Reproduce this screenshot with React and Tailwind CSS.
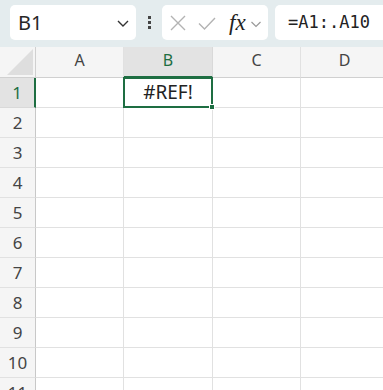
import React from "react";

const cols = ["A", "B", "C", "D"];
const rows = [1, 2, 3, 4, 5, 6, 7, 8, 9, 10, 11];

export default function App() {
  return (
    <div className="w-[383px] h-[390px] overflow-hidden bg-white" style={{ fontFamily: '"Noto Sans", "Open Sans", sans-serif' }}>
      {/* Toolbar */}
      <div className="h-[47px] bg-[#e4ecee] flex items-start pt-[5px] pl-[10px] gap-0">
        <div className="w-[126px] h-[35px] bg-white rounded-[5px] flex items-center justify-between pl-[8px] pr-[6px]">
          <span className="text-[20px] text-[#262626] leading-none">B1</span>
          <svg width="14" height="10" viewBox="0 0 14 10" className="mt-[1px]">
            <path d="M2 3 L7 8 L12 3" fill="none" stroke="#333" strokeWidth="1.4" />
          </svg>
        </div>
        <div className="w-[26px] h-[35px] flex flex-col items-center justify-center gap-[2px]">
          <div className="w-[3px] h-[3px] bg-[#444]" />
          <div className="w-[3px] h-[3px] bg-[#444]" />
          <div className="w-[3px] h-[3px] bg-[#444]" />
        </div>
        <div className="w-[106px] h-[35px] bg-white rounded-[5px] flex items-center pl-[7px]">
          <svg width="18" height="18" viewBox="0 0 18 18">
            <path d="M2 2 L16 16 M16 2 L2 16" stroke="#b3b3b3" strokeWidth="1.4" fill="none" />
          </svg>
          <svg width="20" height="18" viewBox="0 0 20 18" className="ml-[10px]">
            <path d="M2 9.5 L7.5 15 L18 4" stroke="#b3b3b3" strokeWidth="1.4" fill="none" />
          </svg>
          <span
            className="ml-[12px] text-[23px] italic text-[#222] leading-none"
            style={{ fontFamily: '"Liberation Serif", "DejaVu Serif", serif' }}
          >
            fx
          </span>
          <svg width="12" height="8" viewBox="0 0 12 8" className="ml-[4px] mt-[2px]">
            <path d="M1.5 2 L6 6.5 L10.5 2" fill="none" stroke="#999" strokeWidth="1.2" />
          </svg>
        </div>
        <div className="ml-[7px] flex-1 h-[35px] bg-white rounded-l-[5px] flex items-center pl-[13px]">
          <span
            className="text-[17px] text-[#222] leading-none"
            style={{ fontFamily: '"DejaVu Sans Mono", "Liberation Mono", monospace' }}
          >
            =A1:.A10
          </span>
        </div>
      </div>

      {/* Grid */}
      <div className="grid grid-cols-[36px_88px_89px_88px_88px] grid-rows-[31px] auto-rows-[30px] text-[#444]">
        {/* Corner */}
        <div className="bg-[#f5f5f5] border-r border-b border-[#d0d0d0] relative overflow-hidden">
          <svg width="30" height="26" viewBox="0 0 30 26" className="absolute right-[2px] bottom-[2px]">
            <path d="M30 0 L30 26 L4 26 Z" fill="#dedede" />
          </svg>
        </div>
        {cols.map((c) => (
          <div
            key={c}
            className={
              c === "B"
                ? "bg-[#e3e3e3] border-r border-b-2 border-r-[#d9d9d9] border-b-[#1e6e42] text-[#1e6e42] flex items-center justify-center text-[16px] pb-[4px]"
                : "bg-[#f5f5f5] border-r border-b border-r-[#e1e1e1] border-b-[#d0d0d0] flex items-center justify-center text-[16px] pb-[5px]"
            }
          >
            {c}
          </div>
        ))}
        {rows.map((r) => (
          <React.Fragment key={r}>
            <div
              className={
                r === 1
                  ? "bg-[#e3e3e3] border-r-2 border-b border-r-[#1e6e42] border-b-[#d9d9d9] text-[#1e6e42] flex items-center justify-center text-[17px]"
                  : "bg-[#f5f5f5] border-r border-b border-r-[#c8c8c8] border-b-[#e1e1e1] flex items-center justify-center text-[17px] text-[#444]"
              }
            >
              {r}
            </div>
            {cols.map((c) => (
              <div key={c} className="border-r border-b border-[#e1e1e1] relative">
                {r === 1 && c === "B" && (
                  <div className="absolute -left-[1px] -top-[1px] -right-[1px] -bottom-[1px] border-2 border-[#1e6e42] flex items-center justify-center z-10">
                    <span className="text-[19px] text-[#222]">#REF!</span>
                    <div className="absolute -right-[4px] -bottom-[4px] w-[6px] h-[6px] bg-[#1e6e42] border border-white" />
                  </div>
                )}
              </div>
            ))}
          </React.Fragment>
        ))}
      </div>
    </div>
  );
}
